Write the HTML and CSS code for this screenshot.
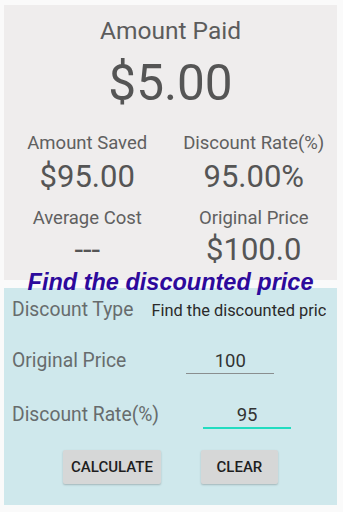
FILE: index.html
```html
<!DOCTYPE html>
<html>
<head>
<meta charset="utf-8">
<link rel="stylesheet" href="styles.css">
</head>
<body>
<div class="page">
  <section class="summary">
    <div class="paid-label">Amount Paid</div>
    <div class="paid-value">$5.00</div>
    <div class="stats">
      <div class="stat">
        <div class="stat-label">Amount Saved</div>
        <div class="stat-value">$95.00</div>
      </div>
      <div class="stat">
        <div class="stat-label">Discount Rate(%)</div>
        <div class="stat-value">95.00%</div>
      </div>
      <div class="stat row2">
        <div class="stat-label">Average Cost</div>
        <div class="stat-value">---</div>
      </div>
      <div class="stat row2">
        <div class="stat-label">Original Price</div>
        <div class="stat-value">$100.0</div>
      </div>
    </div>
  </section>
  <div class="title">Find the discounted price</div>
  <section class="form">
    <div class="row row-type">
      <div class="label">Discount Type</div>
      <div class="spinner">Find the discounted price</div>
    </div>
    <div class="row row-price">
      <div class="label">Original Price</div>
      <div class="input input-price">100</div>
    </div>
    <div class="row row-rate">
      <div class="label">Discount Rate(%)</div>
      <div class="input input-rate focused">95</div>
    </div>
    <div class="buttons">
      <div class="btn">CALCULATE</div>
      <div class="btn">CLEAR</div>
    </div>
  </section>
</div>
</body>
</html>
```
FILE: styles.css
```css
html, body {
  margin: 0;
  padding: 0;
  background: #fafafa;
}
body {
  width: 343px;
  height: 512px;
  overflow: hidden;
  font-family: Roboto, "Noto Sans", sans-serif;
}
.page {
  padding: 5px 0 0 4px;
}
.summary {
  width: 333px;
  height: 264px;
  padding-top: 11px;
  background: #efeded;
  text-align: center;
  color: #5c5c5c;
}
.paid-label {
  font-size: 24.5px;
  line-height: 30px;
}
.paid-value {
  margin-top: 9px;
  font-size: 49.5px;
  line-height: 56px;
  color: #555;
}
.stats {
  margin-top: 20px;
  display: grid;
  grid-template-columns: 1fr 1fr;
  row-gap: 11px;
}
.stat-label {
  font-size: 18.5px;
  line-height: 24px;
  color: #606060;
}
.stat-value {
  margin-top: 4px;
  font-size: 31px;
  line-height: 36px;
  color: #555;
}
.row2 .stat-value {
  margin-top: 2px;
}
.title {
  position: relative;
  margin: -11px 0 -8px 0;
  width: 333px;
  text-align: center;
  font-family: "Liberation Sans", Arial, sans-serif;
  font-weight: bold;
  font-style: italic;
  font-size: 23.5px;
  line-height: 27px;
  color: #2d0a9c;
  z-index: 1;
}
.form {
  width: 333px;
  height: 207px;
  padding-top: 10px;
  background: #cfe8ec;
}
.row {
  display: flex;
  align-items: baseline;
  padding-left: 8px;
}
.label {
  font-size: 19.3px;
  line-height: 24px;
  color: #676c6d;
}
.spinner {
  margin-left: 18px;
  width: 175px;
  overflow: hidden;
  white-space: nowrap;
  font-size: 16.4px;
  line-height: 20px;
  color: #2a2a2a;
}
.row-price {
  margin-top: 27px;
}
.row-rate {
  margin-top: 29px;
}
.input {
  width: 88px;
  text-align: center;
  font-size: 18.5px;
  line-height: 24px;
  color: #333;
  border-bottom: 1.5px solid #8a8e8f;
}
.input-price {
  margin-left: 60px;
}
.input-rate {
  margin-left: 44px;
}
.input.focused {
  border-bottom: 2px solid #22dcc0;
}
.buttons {
  margin-top: 21px;
  display: flex;
  justify-content: center;
  gap: 40px;
}
.btn {
  height: 34px;
  min-width: 77px;
  padding: 0 8px;
  box-sizing: border-box;
  display: flex;
  align-items: center;
  justify-content: center;
  background: #d6d7d7;
  border-radius: 2px;
  box-shadow: 0 1px 2px rgba(0, 0, 0, 0.22);
  font-size: 15px;
  font-weight: 500;
  color: #1e1e1e;
}
```
